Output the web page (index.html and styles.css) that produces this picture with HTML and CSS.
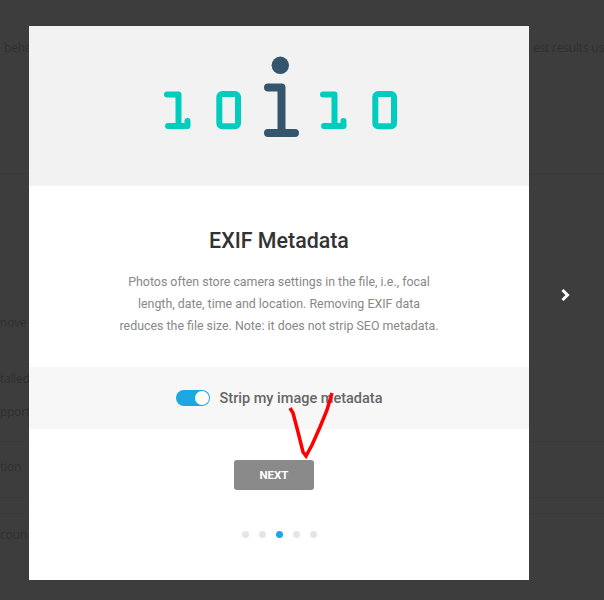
FILE: index.html
```html
<!DOCTYPE html>
<html>
<head>
  <title>EXIF Metadata</title>
  <link rel="stylesheet" href="styles.css">
</head>
<body>
  <div class="page">
    <div class="row row-first"><span>beha</span><span>est results us</span></div>
    <div class="rule rule-a"></div>
    <div class="row row-move"><span>nove t</span></div>
    <div class="row row-installed"><span>talled</span></div>
    <div class="row row-support"><span>pport</span></div>
    <div class="rule rule-b"></div>
    <div class="row row-option"><span>tion</span></div>
    <div class="rule rule-c"></div>
    <div class="rule rule-d"></div>
    <div class="row row-account"><span>coun</span></div>
  </div>

  <div class="modal">
    <div class="hero">
      <svg class="hero-art" width="500" height="160" viewBox="29 26 500 160" fill="none" stroke-linecap="round" stroke-linejoin="round">
        <g stroke="#00cdbe" stroke-width="6">
          <path d="M167 94.500H178.500V126M168 126H187.500V121"/>
          <rect x="219.300" y="94" width="18.700" height="32.300" rx="3"/>
          <path d="M323 94.500H334.500V126M324 126H343.500V121"/>
          <rect x="375.300" y="94" width="18.700" height="32.300" rx="3"/>
        </g>
        <circle cx="280.300" cy="65.300" r="8.700" fill="#34556b"/>
        <path d="M268 87.500H281.500V133M268 133H295" stroke="#34556b" stroke-width="8"/>
      </svg>
    </div>
    <h1>EXIF Metadata</h1>
    <p class="desc">Photos often store camera settings in the file, i.e., focal<br>length, date, time and location. Removing EXIF data<br>reduces the file size. Note: it does not strip SEO metadata.</p>
    <div class="option">
      <span class="toggle"><span class="knob"></span></span>
      <span class="option-label">Strip my image metadata</span>
    </div>
    <button class="next">NEXT</button>
    <div class="dots">
      <span class="dot"></span>
      <span class="dot"></span>
      <span class="dot active"></span>
      <span class="dot"></span>
      <span class="dot"></span>
    </div>
  </div>

  <svg class="chevron" width="12" height="14" viewBox="0 0 12 14" fill="none">
    <path d="M2.500 2L7.500 7L2.500 12" stroke="#fff" stroke-width="3"/>
  </svg>

  <svg class="scrawl" width="604" height="600" viewBox="0 0 604 600" fill="none">
    <path d="M290 408L293 413L298 432L303 452L306 456L312 445L320 427L327 410L332 393" stroke="#f00" stroke-width="3.500"/>
  </svg>
</body>
</html>
```

FILE: styles.css
```css
html, body {
  margin: 0;
  padding: 0;
}
body {
  width: 604px;
  height: 600px;
  overflow: hidden;
  background-color: #3d3d3d;
  font-family: Roboto, sans-serif;
  position: relative;
}

/* dimmed page behind the dialog */
.page {
  font-family: "Open Sans", sans-serif;
  font-size: 12px;
  letter-spacing: -0.200px;
  color: #2f2f2f;
  height: 600px;
  overflow: hidden;
}
.row {
  display: flex;
  white-space: nowrap;
  height: 20px;
  line-height: 20px;
}
.row-first {
  justify-content: space-between;
  margin-top: 38px;
  padding-left: 4px;
}
.rule {
  height: 1px;
  background-color: #3a3a3a;
}
.rule-a {
  margin-top: 115px;
}
.row-move {
  margin-top: 139px;
}
.row-installed {
  margin-top: 36px;
}
.row-support {
  margin-top: 13px;
}
.rule-b {
  margin-top: 19px;
}
.row-option {
  margin-top: 15px;
}
.rule-c {
  margin-top: 20px;
}
.rule-d {
  margin-top: 15px;
}
.row-account {
  margin-top: 11px;
}

.modal {
  position: absolute;
  left: 29px;
  top: 26px;
  width: 500px;
  height: 554px;
  background-color: #fff;
  display: flex;
  flex-direction: column;
  align-items: center;
  text-align: center;
}
.hero {
  width: 100%;
  height: 160px;
  background-color: #f2f2f2;
  flex: none;
}
.hero-art {
  display: block;
}
h1 {
  margin: 41px 0 0;
  font-size: 21.400px;
  line-height: 28px;
  font-weight: 500;
  color: #333;
}
.desc {
  margin: 16px 0 0;
  font-size: 12.400px;
  line-height: 22px;
  color: #888;
}
.option {
  margin-top: 30px;
  width: 100%;
  height: 62px;
  flex: none;
  background-color: #f7f7f7;
  display: flex;
  justify-content: center;
  align-items: center;
  gap: 10px;
}
.toggle {
  width: 34px;
  height: 16px;
  border-radius: 8px;
  background-color: #1ca7e3;
  display: flex;
  justify-content: flex-end;
  align-items: center;
  padding-right: 1px;
  box-sizing: border-box;
}
.knob {
  width: 14px;
  height: 14px;
  border-radius: 50%;
  background-color: #fff;
}
.option-label {
  font-size: 14.500px;
  font-weight: 500;
  color: #666;
}
.next {
  margin-top: 31px;
  margin-right: 10px;
  width: 80px;
  height: 30px;
  border: none;
  border-radius: 3px;
  background-color: #8a8a8a;
  color: #fff;
  font-family: Roboto, sans-serif;
  font-size: 11.500px;
  font-weight: 700;
  padding: 0;
}
.dots {
  margin-top: 41px;
  display: flex;
  gap: 10px;
}
.dot {
  width: 7px;
  height: 7px;
  border-radius: 50%;
  background-color: #e5e5e5;
}
.dot.active {
  background-color: #1ca7e3;
}

.chevron {
  position: absolute;
  left: 560px;
  top: 288px;
}
.scrawl {
  position: absolute;
  left: 0;
  top: 0;
  pointer-events: none;
}
```
